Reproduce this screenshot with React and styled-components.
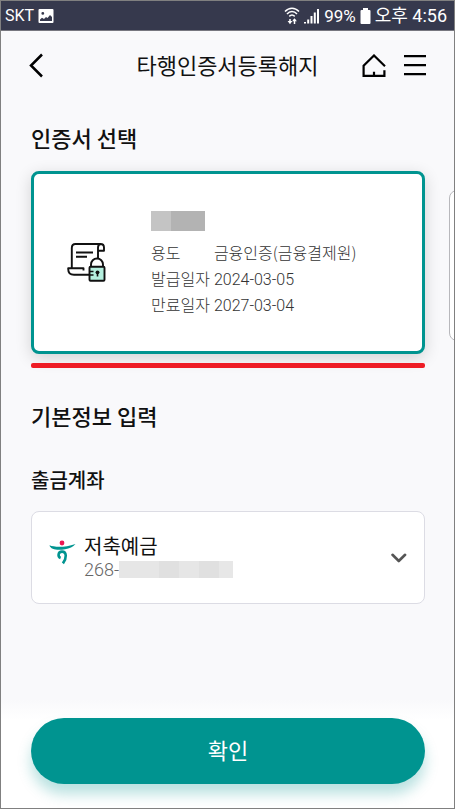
import React, { useState } from 'react'
import styled, { createGlobalStyle } from 'styled-components';

function App() {
    const [account, setAccount] = useState('savings');

    return (
        <>
            <GlobalStyle />
            <ScreenStyled>
                <StatusBar />
                <HeaderStyled>
                    <IconButton type="button" aria-label="이전">
                        <BackIcon />
                    </IconButton>
                    <h1>타행인증서등록해지</h1>
                    <div className="actions">
                        <IconButton type="button" aria-label="홈">
                            <HomeIcon />
                        </IconButton>
                        <IconButton type="button" aria-label="메뉴">
                            <MenuIcon />
                        </IconButton>
                    </div>
                </HeaderStyled>
                <MainStyled>
                    <SectionTitle>인증서 선택</SectionTitle>
                    <CardList>
                        <CertCard type="button" aria-pressed="true">
                            <CertIcon />
                            <CertInfo>
                                <CertName>
                                    <Mask $width={20} $height={20} $color="#c4c4c4" />
                                    <Mask $width={34} $height={20} $color="#b3b3b3" />
                                </CertName>
                                <span>용도</span>
                                <span>금융인증(금융결제원)</span>
                                <span>발급일자</span>
                                <CertDate>2024-03-05</CertDate>
                                <span>만료일자</span>
                                <CertDate>2027-03-04</CertDate>
                            </CertInfo>
                        </CertCard>
                        <NextCard type="button" aria-label="다음 인증서" />
                    </CardList>
                    <RedLine />
                    <SectionTitle>기본정보 입력</SectionTitle>
                    <FieldLabel htmlFor="account">출금계좌</FieldLabel>
                    <AccountBox>
                        <BankLogo />
                        <div className="account">
                            <select
                                id="account"
                                value={account}
                                onChange={(e) => setAccount(e.target.value)}
                            >
                                <option value="savings">저축예금</option>
                            </select>
                            <div className="number">
                                268-
                                <Mask $width={40} $height={17} $color="#e6e6e6" />
                                <Mask $width={20} $height={17} $color="#e0e0e0" />
                                <Mask $width={20} $height={17} $color="#e6e6e6" />
                                <Mask $width={20} $height={17} $color="#e0e0e0" />
                                <Mask $width={14} $height={17} $color="#e7e7e7" />
                            </div>
                        </div>
                        <ChevronIcon />
                    </AccountBox>
                </MainStyled>
                <FooterStyled>
                    <ConfirmButton type="button">확인</ConfirmButton>
                </FooterStyled>
            </ScreenStyled>
        </>
    )
}

function StatusBar() {
    return (
        <StatusBarStyled>
            <span className="carrier">SKT</span>
            <svg width="16" height="16" viewBox="0 0 16 16" aria-hidden="true">
                <path fillRule="evenodd" fill="#fff" d="M1.500 1h13a1 1 0 0 1 1 1v12a1 1 0 0 1-1 1h-13a1 1 0 0 1-1-1V2a1 1 0 0 1 1-1ZM2 11.500V13h12V9l-2-2-2.500 3-1.500-1-2 2-2-1.200ZM4.800 4a1.400 1.400 0 1 0 0 2.800 1.400 1.400 0 0 0 0-2.800Z" />
            </svg>
            <div className="right">
                <svg width="16" height="18" viewBox="0 0 16 18" fill="none" stroke="#fff" strokeWidth="1.500" aria-hidden="true">
                    <path d="M1 4.500c4-4.400 10-4.400 14 0M3 7c2.800-3.200 7.200-3.200 10 0M5.300 9.400c1.600-1.600 3.800-1.600 5.400 0" />
                    <path d="M6 16v-4M10.500 12v5" />
                    <path fill="#fff" stroke="none" d="M3.600 14h4.800L6 17.200ZM8.100 14.200h4.800L10.500 11.200Z" />
                </svg>
                <svg width="16" height="16" viewBox="0 0 16 16" fill="#fff" aria-hidden="true">
                    <path d="M0 15.500V14h2v1.500ZM3.200 15.500v-4h2v4ZM6.500 15.500V8h2v7.500ZM9.800 15.500V4.500h2v11ZM13 15.500V1h2v14.500Z" />
                </svg>
                <span className="battery">99%</span>
                <svg width="11" height="16" viewBox="0 0 11 16" fill="#fff" aria-hidden="true">
                    <path d="M3 0h5v2h1.500a1 1 0 0 1 1 1v12a1 1 0 0 1-1 1h-8a1 1 0 0 1-1-1V3a1 1 0 0 1 1-1H3Z" />
                </svg>
                <time>오후 4:56</time>
            </div>
        </StatusBarStyled>
    )
}

function BackIcon() {
    return (
        <svg width="14" height="26" viewBox="0 0 14 26" fill="none" stroke="#000" strokeWidth="2.500">
            <path d="M13 1.500 2 12.500l11 11" />
        </svg>
    )
}

function HomeIcon() {
    return (
        <svg width="24" height="24" viewBox="0 0 24 24" fill="none" stroke="#000" strokeWidth="2.200">
            <path d="M23 12.200 12 1.500 1.600 11.800V21.800H22.400V16.200M12 21.800v-4" />
        </svg>
    )
}

function MenuIcon() {
    return (
        <svg width="22" height="22" viewBox="0 0 22 22" fill="none" stroke="#000" strokeWidth="2.300">
            <path d="M0 1.200h22M0 10.200h22M0 19.200h22" />
        </svg>
    )
}

function CertIcon() {
    return (
        <svg width="39" height="40" viewBox="0 0 39 40" fill="none" stroke="#111" strokeWidth="1.900" strokeLinejoin="round" aria-hidden="true">
            <path d="M4.800 25V5Q4.800 1 8.500 1H33.500Q37 1 37 4.500V7.700H31V4.500Q31 1 34 1M31 7v9" />
            <path d="M22 31.800H7Q1.200 31.800 1.200 26V25.200H16.500V27.500" />
            <path d="M9 9.500h17M9 13.800h11" />
            <path fill="#fff" d="M24 24v-2.500a6 6 0 0 1 12 0V24" />
            <rect x="22.500" y="23.800" width="15" height="14" rx="1" fill="#b5f0df" />
            <path d="M22.500 28.500h4M22.500 32h4" strokeWidth="1.300" />
            <path d="M30.500 29v4.500" strokeWidth="1.600" />
            <circle cx="30.500" cy="29.300" r="1.900" fill="#111" stroke="none" />
        </svg>
    )
}

function BankLogo() {
    return (
        <svg className="logo" width="27" height="26" viewBox="0 0 27 26" aria-hidden="true">
            <circle cx="13" cy="4" r="2.400" fill="#ed1651" />
            <path fill="#009490" d="M.5 6.300c5 2 15 2.500 26-1.300-2.500 3-6 4.400-10.500 5.200C9.500 11.500 1.500 11 .5 6.300Z" />
            <path fill="none" stroke="#009490" strokeWidth="2.600" d="M11.600 19C8.600 17.800 8.800 12.600 13 12.600c4.800 0 4.900 6.600.9 11.800" />
        </svg>
    )
}

function ChevronIcon() {
    return (
        <svg width="16" height="10" viewBox="0 0 16 10" fill="none" stroke="#555" strokeWidth="2.600" strokeLinecap="round" strokeLinejoin="round" aria-hidden="true">
            <path d="M1.500 1.800 7.800 8l6.300-6.200" />
        </svg>
    )
}

const GlobalStyle = createGlobalStyle`
    *{
        box-sizing: border-box;
    }
    body{
        margin: 0;
        color: #111;
        font-family: "Noto Sans CJK KR", sans-serif;
    }
    h1, h2{
        margin: 0;
    }
    button, select{
        font-family: inherit;
        color: inherit;
        padding: 0;
        border: none;
        background: none;
    }
    svg{
        display: block;
        flex-shrink: 0;
    }
`;

const ScreenStyled = styled.div`
    min-height: 100vh;
    display: flex;
    flex-direction: column;
    overflow: hidden;
    border: 1px solid #808080;
    background: #f9f9fb;
`;

const StatusBarStyled = styled.div`
    display: flex;
    align-items: center;
    height: 30px;
    padding: 0 7px 0 4px;
    gap: 4px;
    background: #36394d;
    border-bottom: 1px solid #77777f;
    color: #fff;
    font-family: Roboto, "Noto Sans CJK KR", sans-serif;
    font-size: 18px;
    line-height: 28px;
    white-space: nowrap;
    .carrier{
        font-size: 16px;
    }
    .battery{
        font-size: 17px;
    }
    .right{
        display: flex;
        align-items: center;
        gap: 4px;
        margin-left: auto;
    }
`;

const HeaderStyled = styled.header`
    display: grid;
    grid-template-columns: 1fr auto 1fr;
    align-items: center;
    height: 70px;
    padding: 0 28px;
    h1{
        padding-bottom: 4px;
        font-size: 22px;
        font-weight: 400;
        line-height: 32px;
    }
    .actions{
        display: flex;
        align-items: center;
        justify-content: flex-end;
        gap: 18px;
    }
`;

const IconButton = styled.button`
    justify-self: start;
    cursor: pointer;
`;

const MainStyled = styled.main`
    padding: 20px 29px 0 30px;
`;

const SectionTitle = styled.h2`
    font-size: 22px;
    font-weight: 500;
    line-height: 32px;
`;

const CardList = styled.div`
    display: flex;
    align-items: center;
    gap: 24px;
    margin-top: 18px;
`;

const CertCard = styled.button`
    flex: 0 0 100%;
    display: flex;
    align-items: center;
    gap: 45px;
    height: 183px;
    padding: 0 33px;
    border: 3px solid #009490;
    border-radius: 8px;
    background: #fff;
    box-shadow: 0 4px 16px rgba(0, 0, 0, .16);
    text-align: left;
    cursor: pointer;
`;

const NextCard = styled.button`
    flex: 0 0 100%;
    height: 151px;
    margin-top: 6px;
    border: 1px solid #b8b8bc;
    border-radius: 8px;
    background: #fff;
`;

const CertInfo = styled.span`
    display: grid;
    grid-template-columns: auto 1fr;
    grid-template-rows: 28px;
    grid-auto-rows: 26px;
    align-items: baseline;
    column-gap: 4px;
    padding-top: 2px;
    font-size: 16px;
    font-weight: 300;
    line-height: 26px;
    color: #333;
    white-space: nowrap;
`;

const CertName = styled.span`
    grid-column: 1 / -1;
    display: flex;
`;

const CertDate = styled.span`
    font-family: Roboto, sans-serif;
`;

const Mask = styled.span`
    width: ${({ $width }) => $width}px;
    height: ${({ $height }) => $height}px;
    background: ${({ $color }) => $color};
`;

const RedLine = styled.hr`
    height: 5px;
    margin: 9px 0 31px;
    border: none;
    border-radius: 2px;
    background: #ee1c25;
    position: relative;
`;

const FieldLabel = styled.label`
    display: block;
    margin: 34px 0 16px;
    font-size: 20px;
    font-weight: 500;
    line-height: 30px;
`;

const AccountBox = styled.div`
    display: flex;
    align-items: center;
    gap: 8px;
    height: 93px;
    padding: 0 17px;
    border: 1px solid #dcdce4;
    border-radius: 8px;
    background: #fff;
    .logo{
        margin-bottom: 12px;
    }
    .account{
        flex: 1;
        padding-bottom: 2px;
    }
    select{
        display: block;
        width: 100%;
        appearance: none;
        font-size: 20px;
        line-height: 26px;
        cursor: pointer;
    }
    .number{
        display: flex;
        align-items: center;
        font-family: Roboto, sans-serif;
        font-size: 18px;
        font-weight: 300;
        line-height: 22px;
        color: #666;
    }
`;

const FooterStyled = styled.footer`
    margin-top: auto;
    padding: 18px 29px 24px 30px;
    background: linear-gradient(#f9f9fb, #fff 20px);
`;

const ConfirmButton = styled.button`
    display: block;
    width: 100%;
    height: 66px;
    padding-bottom: 4px;
    border-radius: 33px;
    background: #009490;
    box-shadow: 0 10px 14px rgba(0, 148, 144, .28);
    color: #fff;
    font-size: 22px;
    cursor: pointer;
`;

export default App;
